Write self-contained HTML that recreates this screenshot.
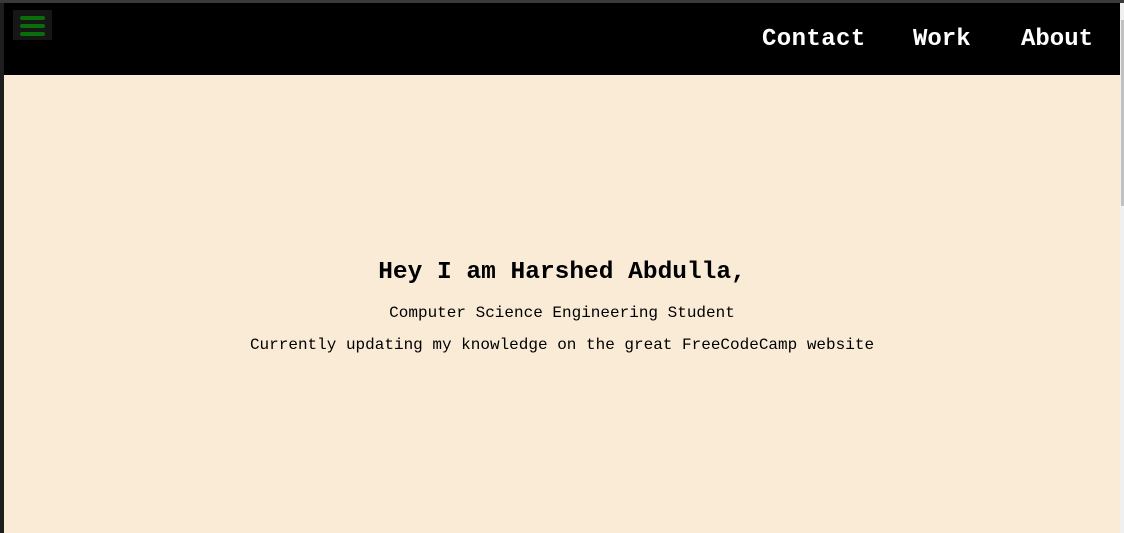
<!DOCTYPE html>
<html><head><style>
html,body{margin:0;padding:0;width:1124px;height:533px;overflow:hidden;background:#2a2a2a;}
.frame{position:absolute;left:4px;top:3px;width:1116px;height:530px;background:#faebd7;}
.top{position:absolute;left:0;top:0;width:1124px;height:3px;background:#3a3a3a;}
.left{position:absolute;left:0;top:3px;width:4px;height:530px;background:#1e1e1e;}
.sb{position:absolute;left:1120px;top:3px;width:4px;height:530px;background:#f0f0f0;}
.thumb{position:absolute;left:1121px;top:20px;width:3px;height:186px;background:#c1c1c1;}
header{position:absolute;left:0;top:0;width:1116px;height:72px;background:#000;}
.menu{position:absolute;left:9px;top:7px;width:39px;height:30px;background:#161616;}
.menu i{position:absolute;left:7px;width:25px;height:4px;border-radius:2px;background:#0a6e0a;}
nav a{position:absolute;top:23px;color:#fff;font:bold 24px "Liberation Mono",monospace;text-decoration:none;}
.c{position:absolute;width:1116px;text-align:center;font-family:"Liberation Mono",monospace;color:#000;}
</style></head><body>
<div class="top"></div><div class="left"></div>
<div class="frame">
<header>
<div class="menu"><i style="top:6px"></i><i style="top:14px"></i><i style="top:22px"></i></div>
<nav><a style="left:758px;letter-spacing:0.4px">Contact</a><a style="left:909px">Work</a><a style="left:1017px">About</a></nav>
</header>
<div class="c" style="top:256px;font-size:24.5px;font-weight:bold">Hey I am Harshed Abdulla,</div>
<div class="c" style="top:301px;font-size:16px">Computer Science Engineering Student</div>
<div class="c" style="top:333px;font-size:16px">Currently updating my knowledge on the great FreeCodeCamp website</div>
</div>
<div class="sb"></div><div class="thumb"></div>
</body></html>
